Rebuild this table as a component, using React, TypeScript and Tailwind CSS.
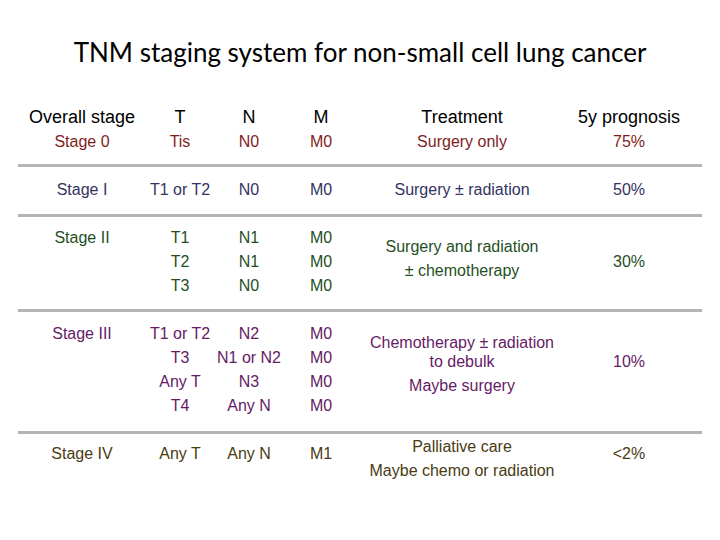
const rowLine = "border-t-[3px] border-[#b4b4b4]"

function Cell({ children, className = "" }: { children: React.ReactNode; className?: string }) {
  return <div className={`text-center ${className}`}>{children}</div>
}

export default function App() {
  const cols = "grid grid-cols-[128px_68px_70px_74px_208px_126px]"

  return (
    <div className="w-[720px] h-[540px] bg-white font-[family-name:Liberation_Sans,Arial,sans-serif]">
      {/* Title */}
      <h1 className="pt-[37px] text-center text-[26px] leading-[30px] text-black font-[family-name:Lato,sans-serif]">
        TNM staging system for non-small cell lung cancer
      </h1>

      <div className="ml-[18px] mt-[38px] w-[684px] text-[16px] leading-[24px]">
        {/* Header */}
        <div className={`${cols} text-[18px] leading-[24px] text-black`}>
          <Cell>Overall stage</Cell>
          <Cell>T</Cell>
          <Cell>N</Cell>
          <Cell>M</Cell>
          <Cell>Treatment</Cell>
          <Cell>5y prognosis</Cell>
        </div>

        {/* Stage 0 */}
        <div className={`${cols} h-[35px] pt-[1px] text-[#7f1d1d]`}>
          <Cell>Stage 0</Cell>
          <Cell>Tis</Cell>
          <Cell>N0</Cell>
          <Cell>M0</Cell>
          <Cell>Surgery only</Cell>
          <Cell>75%</Cell>
        </div>

        {/* Stage I */}
        <div className={`${cols} ${rowLine} h-[50px] pt-[11px] text-[#33335f]`}>
          <Cell>Stage I</Cell>
          <Cell>T1 or T2</Cell>
          <Cell>N0</Cell>
          <Cell>M0</Cell>
          <Cell>Surgery ± radiation</Cell>
          <Cell>50%</Cell>
        </div>

        {/* Stage II */}
        <div className={`${cols} ${rowLine} h-[95px] text-[#1f4f1f]`}>
          <Cell className="pt-[9px]">Stage II</Cell>
          <Cell className="pt-[9px]">T1<br />T2<br />T3</Cell>
          <Cell className="pt-[9px]">N1<br />N1<br />N0</Cell>
          <Cell className="pt-[9px]">M0<br />M0<br />M0</Cell>
          <Cell className="pt-[18px]">Surgery and radiation<br />± chemotherapy</Cell>
          <Cell className="pt-[33px]">30%</Cell>
        </div>

        {/* Stage III */}
        <div className={`${cols} ${rowLine} h-[122px] text-[#661a66]`}>
          <Cell className="pt-[10px]">Stage III</Cell>
          <Cell className="pt-[10px]">T1 or T2<br />T3<br />Any T<br />T4</Cell>
          <Cell className="pt-[10px]">N2<br />N1 or N2<br />N3<br />Any N</Cell>
          <Cell className="pt-[10px]">M0<br />M0<br />M0<br />M0</Cell>
          <Cell className="pt-[21px]">
            <div className="leading-[19px]">Chemotherapy ± radiation<br />to debulk</div>
            <div className="mt-[3px]">Maybe surgery</div>
          </Cell>
          <Cell className="pt-[38px]">10%</Cell>
        </div>

        {/* Stage IV */}
        <div className={`${cols} ${rowLine} text-[#4a3b12]`}>
          <Cell className="pt-[8px]">Stage IV</Cell>
          <Cell className="pt-[8px]">Any T</Cell>
          <Cell className="pt-[8px]">Any N</Cell>
          <Cell className="pt-[8px]">M1</Cell>
          <Cell className="pt-[1px]">Palliative care<br />Maybe chemo or radiation</Cell>
          <Cell className="pt-[8px]">&lt;2%</Cell>
        </div>
      </div>
    </div>
  )
}
